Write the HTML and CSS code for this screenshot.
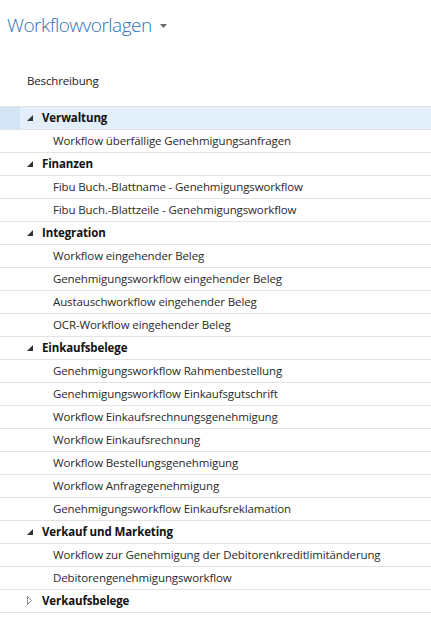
FILE: index.html
```html
<!DOCTYPE html>
<html lang="de">
<head>
<meta charset="utf-8">
<link rel="stylesheet" href="styles.css">
</head>
<body>
<div class="page">
  <h1 class="title">Workflowvorlagen<span class="caret"><svg width="7" height="4" viewBox="0 0 7 4"><path d="M0 0H7L3.5 4Z" fill="#6b6b6b"/></svg></span></h1>
  <div class="colhead"><span>Beschreibung</span></div>
  <div class="list">
    <div class="row group selected"><span class="sel-mark"></span><span class="tog"><svg width="6" height="6" viewBox="0 0 6 6"><path d="M6 0V6H0Z" fill="#333"/></svg></span><span class="label">Verwaltung</span></div>
    <div class="row child"><span class="label">Workflow überfällige Genehmigungsanfragen</span></div>
    <div class="row group"><span class="sel-mark"></span><span class="tog"><svg width="6" height="6" viewBox="0 0 6 6"><path d="M6 0V6H0Z" fill="#333"/></svg></span><span class="label">Finanzen</span></div>
    <div class="row child"><span class="label">Fibu Buch.-Blattname - Genehmigungsworkflow</span></div>
    <div class="row child"><span class="label">Fibu Buch.-Blattzeile - Genehmigungsworkflow</span></div>
    <div class="row group"><span class="sel-mark"></span><span class="tog"><svg width="6" height="6" viewBox="0 0 6 6"><path d="M6 0V6H0Z" fill="#333"/></svg></span><span class="label">Integration</span></div>
    <div class="row child"><span class="label">Workflow eingehender Beleg</span></div>
    <div class="row child"><span class="label">Genehmigungsworkflow eingehender Beleg</span></div>
    <div class="row child"><span class="label">Austauschworkflow eingehender Beleg</span></div>
    <div class="row child"><span class="label">OCR-Workflow eingehender Beleg</span></div>
    <div class="row group"><span class="sel-mark"></span><span class="tog"><svg width="6" height="6" viewBox="0 0 6 6"><path d="M6 0V6H0Z" fill="#333"/></svg></span><span class="label">Einkaufsbelege</span></div>
    <div class="row child"><span class="label">Genehmigungsworkflow Rahmenbestellung</span></div>
    <div class="row child"><span class="label">Genehmigungsworkflow Einkaufsgutschrift</span></div>
    <div class="row child"><span class="label">Workflow Einkaufsrechnungsgenehmigung</span></div>
    <div class="row child"><span class="label">Workflow Einkaufsrechnung</span></div>
    <div class="row child"><span class="label">Workflow Bestellungsgenehmigung</span></div>
    <div class="row child"><span class="label">Workflow Anfragegenehmigung</span></div>
    <div class="row child"><span class="label">Genehmigungsworkflow Einkaufsreklamation</span></div>
    <div class="row group"><span class="sel-mark"></span><span class="tog"><svg width="6" height="6" viewBox="0 0 6 6"><path d="M6 0V6H0Z" fill="#333"/></svg></span><span class="label">Verkauf und Marketing</span></div>
    <div class="row child"><span class="label">Workflow zur Genehmigung der Debitorenkreditlimitänderung</span></div>
    <div class="row child"><span class="label">Debitorengenehmigungsworkflow</span></div>
    <div class="row group"><span class="sel-mark"></span><span class="tog"><svg width="5" height="9" viewBox="0 0 5 9"><path d="M0.5 0.5L4.5 4.5L0.5 8.5Z" fill="none" stroke="#8a8a8a" stroke-width="1"/></svg></span><span class="label">Verkaufsbelege</span></div>
  </div>
</div>
</body>
</html>
```

FILE: styles.css
```css
html, body {
  margin: 0;
  padding: 0;
  background: #ffffff;
}
body {
  font-family: "Open Sans", "Noto Sans", sans-serif;
  color: #2b2b2b;
}
.page {
  width: 431px;
}
.title {
  margin: 0;
  padding: 12px 0 0 7px;
  height: 26px;
  font-size: 19px;
  line-height: 26px;
  font-weight: 300;
  color: #2f74b5;
  letter-spacing: -0.5px;
  display: flex;
  align-items: center;
}
.caret {
  display: inline-flex;
  margin-left: 8px;
  margin-top: 1px;
}
.colhead {
  height: 68px;
  box-sizing: border-box;
  display: flex;
  align-items: flex-end;
  padding: 0 0 17px 27px;
  font-size: 11.5px;
  line-height: 16px;
  color: #222222;
  letter-spacing: -0.15px;
}
.list {
  border-bottom: 1px solid #e3e3e3;
}
.row {
  height: 23px;
  box-sizing: border-box;
  border-top: 1px solid #e3e3e3;
  display: flex;
  align-items: center;
  font-size: 11.5px;
  letter-spacing: -0.12px;
  padding-bottom: 1px;
}
.row .label {
  white-space: nowrap;
}
.child {
  padding-left: 53px;
  color: #2a2a2a;
}
.group {
  font-weight: 700;
  color: #111111;
}
.sel-mark {
  width: 20px;
  align-self: stretch;
  margin-bottom: -1px;
}
.tog {
  width: 22px;
  display: flex;
  align-items: center;
  padding-left: 7px;
  box-sizing: border-box;
}
.selected {
  background: #e2eef9;
}
.selected .sel-mark {
  background: #d3e5f5;
}
```
